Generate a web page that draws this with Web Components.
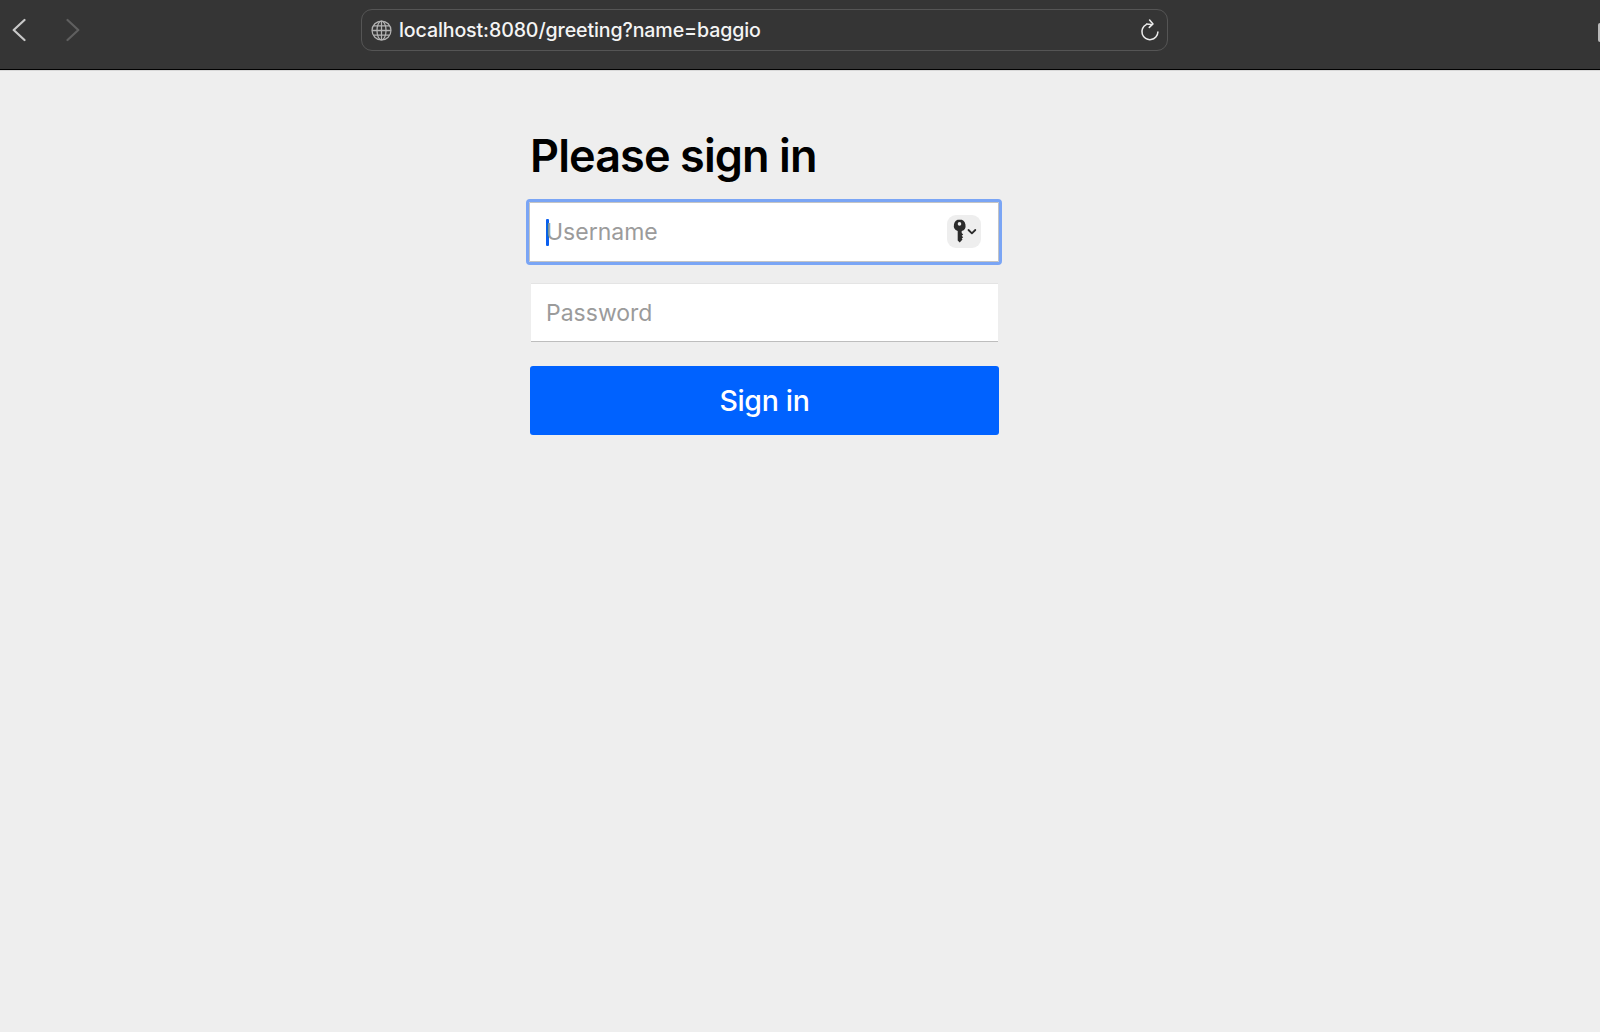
<!DOCTYPE html>
<html>
<head>
<meta charset="utf-8">
<title>Please sign in</title>
<style>
  html, body { margin: 0; height: 100%; background: #eee; }
  body { font-family: Inter, "Liberation Sans", sans-serif; overflow: hidden; }
</style>
</head>
<body>
<browser-bar url="localhost:8080/greeting?name=baggio"></browser-bar>
<login-page>
  <form-title>Please sign in</form-title>
  <text-field focused>Username</text-field>
  <text-field>Password</text-field>
  <sign-button>Sign in</sign-button>
</login-page>
<script>
  class BrowserBar extends HTMLElement {
    constructor() {
      super();
      const shadow = this.attachShadow({mode: 'open'});
      shadow.innerHTML = `<style>
  :host { display: block; position: relative; height: 70px; box-sizing: border-box; background: #353535; border-bottom: 1px solid #000; box-shadow: 0 1px 0 #d8d8d8; }
  .row { display: flex; align-items: center; height: 59px; padding: 0 0 0 12px; }
  .nav { display: flex; gap: 40px; width: 349px; }
  .url { box-sizing: border-box; width: 807px; height: 42px; margin-top: 1px; display: flex; align-items: center; padding: 0 7px 0 9px; border: 1px solid #555; border-radius: 11px; color: #f4f4f4; font-size: 19.6px; letter-spacing: -.12px; }
  .text { margin-left: 7px; flex: 1; white-space: nowrap; font-weight: 500; }
  svg { display: block; flex: none; }
  .edge { position: absolute; right: 0; top: 23px; width: 2px; height: 19px; background: #b9b9b9; border-radius: 2px 0 0 2px; }
</style>
<div class="row">
  <div class="nav">
    <svg width="14" height="24" viewBox="0 0 14 24" fill="none" stroke="#c9c9c9" stroke-width="2.2" stroke-linecap="round" stroke-linejoin="round"><path d="M12.5 2 1.7 12 12.5 22"/></svg>
    <svg width="14" height="24" viewBox="0 0 14 24" fill="none" stroke="#5f5f5f" stroke-width="2.2" stroke-linecap="round" stroke-linejoin="round"><path d="M1.5 2 12.3 12 1.5 22"/></svg>
  </div>
  <div class="url">
    <svg width="21" height="21" viewBox="0 0 20 20" fill="none" stroke="#b4b4b4" stroke-width="1.2"><circle cx="10" cy="10" r="9"/><ellipse cx="10" cy="10" rx="4.3" ry="9"/><path d="M10 1v18M1 10h18M2.3 5.6h15.4M2.3 14.4h15.4"/></svg>
    <span class="text"></span>
    <svg width="20" height="22" viewBox="0 0 20 22" fill="none" stroke="#ececec" stroke-width="1.5" stroke-linecap="round" stroke-linejoin="round"><path d="M6.2 5.6A8 8 0 1 0 17.900 13"/><path d="M6.600 5 11 5.400M9.600 1 13 4.900 9.300 8.400"/></svg>
  </div>
</div>
<div class="edge"></div>`;
      shadow.querySelector('.text').textContent = this.getAttribute('url');
    }
  }
  customElements.define('browser-bar', BrowserBar);

  class LoginPage extends HTMLElement {
    constructor() {
      super();
      this.attachShadow({mode: 'open'}).innerHTML = `<style>
  :host { display: block; padding: 59px 0 0 530px; }
  .form { width: 469px; display: flex; flex-direction: column; }
</style>
<div class="form"><slot></slot></div>`;
    }
  }
  customElements.define('login-page', LoginPage);

  class FormTitle extends HTMLElement {
    constructor() {
      super();
      this.attachShadow({mode: 'open'}).innerHTML = `<style>
  :host { display: block; height: 73px; font-size: 45px; line-height: 54px; font-weight: 600; color: #000; letter-spacing: -.9px; white-space: nowrap; }
</style><slot></slot>`;
    }
  }
  customElements.define('form-title', FormTitle);

  class TextField extends HTMLElement {
    constructor() {
      super();
      const focused = this.hasAttribute('focused');
      this.attachShadow({mode: 'open'}).innerHTML = `<style>
  :host { display: block; height: 59px; margin: 0 0 24px 1px; width: 467px; box-sizing: border-box; position: relative; background: #fff; border-top: 1px solid #e4e4e4; border-bottom: 1.5px solid #bdbdbd; color: #9b9b9b; font-size: 23px; }
  :host([focused]) { height: 60px; width: 470px; margin: 0 0 21px -1px; border: 1px solid #c4c4c4; outline: 3px solid #7aa5f5; border-radius: 1px; }
  .inner { display: flex; align-items: center; height: 100%; padding-left: 15px; }
  :host([focused]) .inner { padding-left: 16px; }
  .caret { width: 3px; height: 27px; margin-right: -3px; background: #0a5ff0; border-radius: 1px; }
  .key { position: absolute; right: 17px; top: 12px; width: 34px; height: 33px; border-radius: 9px; background: #eee; }
  .key svg { display: block; }
</style>
<div class="inner">${focused ? '<span class="caret"></span>' : ''}<slot></slot></div>
${focused ? `<div class="key"><svg width="34" height="33" viewBox="0 0 34 33"><path fill="#2b2b2b" fill-rule="evenodd" d="M12.5 4.5a6 6 0 0 1 2.2 11.6v2l1.5 1.3-1.500 1.400 1.500 1.400-1.500 1.400.8 1-2.800 2.900-2-2V16.100a6 6 0 0 1 2.300-11.600Zm0 2.600a1.800 1.800 0 1 0 0 3.600 1.800 1.800 0 0 0 0-3.600Z"/><path d="m21.500 15 3.400 3.400 3.400-3.400" fill="none" stroke="#2b2b2b" stroke-width="1.800" stroke-linecap="round" stroke-linejoin="round"/></svg></div>` : ''}`;
    }
  }
  customElements.define('text-field', TextField);

  class SignButton extends HTMLElement {
    constructor() {
      super();
      this.attachShadow({mode: 'open'}).innerHTML = `<style>
  :host { display: flex; align-items: center; justify-content: center; height: 69px; background: #0062ff; border-radius: 3px; color: #fff; font-size: 28.500px; font-weight: 500; cursor: pointer; letter-spacing: -.3px; }
</style><slot></slot>`;
    }
  }
  customElements.define('sign-button', SignButton);
</script>
</body>
</html>
